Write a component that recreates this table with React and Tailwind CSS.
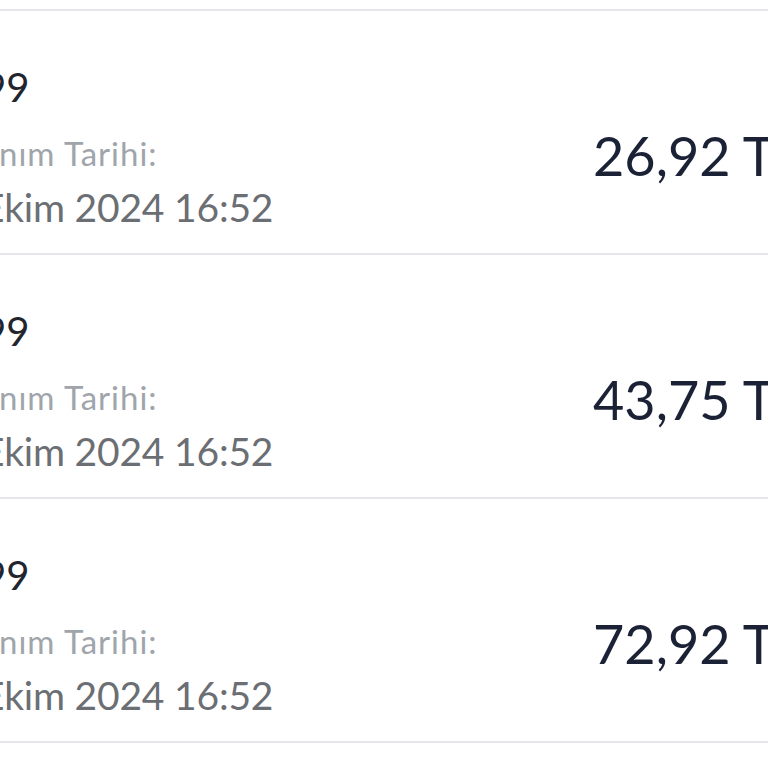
export default function App() {
  const rows = ["26,92 TL", "43,75 TL", "72,92 TL"];
  return (
    <div className="w-[768px] h-[768px] overflow-hidden bg-white" style={{ fontFamily: "Lato, 'Noto Sans', sans-serif" }}>
      <div className="h-[9px]" />
      <div className="border-t-2 border-[#e4e6e9]">
        {rows.map((amt, i) => (
          <div key={i} className="flex h-[244px] border-b-2 border-[#e4e6e9] justify-between">
            <div className="flex flex-col pt-[56px]">
              <div className="ml-[-17px] text-[40px] leading-none text-[#22252e] whitespace-nowrap">99</div>
              <div className="mt-[30px] ml-[-1px] text-[33px] leading-none tracking-[1px] text-[#a0a4ab] whitespace-nowrap">nım Tarihi:</div>
              <div className="mt-[18px] ml-[-18px] text-[39px] leading-none tracking-[-0.2px] text-[#6b6e73] whitespace-nowrap">Ekim 2024 16:52</div>
            </div>
            <div className="pt-[118px] w-[175px] shrink-0">
              <div className="text-[54px] leading-none text-[#1c2236] whitespace-nowrap">{amt}</div>
            </div>
          </div>
        ))}
      </div>
    </div>
  );
}
